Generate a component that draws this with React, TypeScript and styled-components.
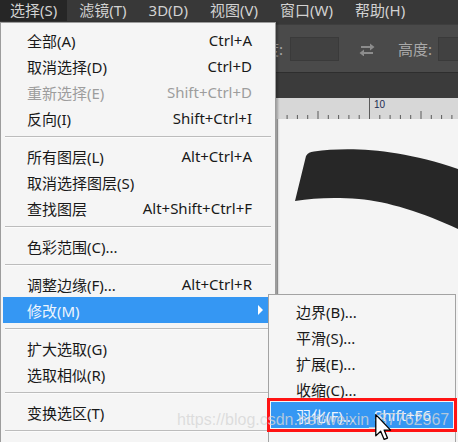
import styled, { createGlobalStyle } from 'styled-components';

const GlobalStyle = createGlobalStyle`
  html, body {
    margin: 0;
    padding: 0;
  }
  body {
    width: 458px;
    height: 442px;
    overflow: hidden;
    background: #282828;
    font-family: "Noto Sans", "Noto Sans CJK SC", sans-serif;
  }
`;

const Screen = styled.div`
  position: relative;
  width: 458px;
  height: 442px;
  overflow: hidden;
  display: flex;
  flex-direction: column;
  background: #282828;
`;

const MenuBar = styled.div`
  display: flex;
  gap: 2px;
  height: 24px;
  flex-shrink: 0;
  background: #383838;
`;

const MenuTitle = styled.div<{ $open?: boolean }>`
  height: 21px;
  padding: 0 10px;
  font-size: 15px;
  line-height: 21px;
  white-space: nowrap;
  color: #d2d2d2;
  background: ${(p) => (p.$open ? '#262626' : 'transparent')};
`;

const OptionsBar = styled.div`
  display: flex;
  align-items: center;
  height: 47px;
  flex-shrink: 0;
  padding-left: 249px;
  overflow: hidden;
  background: #4a4a4a;
  border-top: 1px solid #3e3e3e;
  border-bottom: 1px solid #2e2e2e;
`;

const OptionLabel = styled.span<{ $gap?: number }>`
  flex-shrink: 0;
  margin-left: ${(p) => p.$gap ?? 0}px;
  font-size: 15px;
  white-space: nowrap;
  color: #a9a9a9;
`;

const OptionField = styled.div<{ $gap: number }>`
  flex-shrink: 0;
  width: 49px;
  height: 24px;
  margin-left: ${(p) => p.$gap}px;
  background: #414141;
  border: 1px solid #3a3a3a;
  box-sizing: border-box;
`;

const SwapIcon = styled.svg`
  margin-left: 19px;
  flex-shrink: 0;
`;

const TabStrip = styled.div`
  height: 25px;
  flex-shrink: 0;
  background: #3b3b3b;
`;

const Workspace = styled.div`
  display: flex;
  flex: 1;
`;

const LeftPane = styled.div`
  width: 257px;
  background: #282828;
`;

const Document = styled.div`
  display: flex;
  flex-direction: column;
  flex: 1;
`;

const HRuler = styled.svg`
  display: block;
  height: 21px;
  width: 100%;
  background: #d7d7d7;
`;

const DocBody = styled.div`
  display: flex;
  flex: 1;
`;

const VRuler = styled.div`
  width: 21px;
  background: #cdcdcd;
  border-right: 1px solid #a9a9a9;
`;

const Canvas = styled.div`
  flex: 1;
  background: #f4f4f4;
`;

const Dropdown = styled.div`
  position: absolute;
  left: 0;
  top: 22px;
  width: 276px;
  height: 440px;
  padding-top: 4px;
  box-sizing: border-box;
  background: #f5f5f5;
  border: 1px solid #9c9c9c;
  box-shadow: 2px 0 2px rgba(0, 0, 0, 0.25);
  font-size: 15px;
`;

const Item = styled.div<{ $active?: boolean; $disabled?: boolean }>`
  display: flex;
  align-items: center;
  height: 26px;
  margin: 0 2px;
  padding: 0 21px 0 24px;
  white-space: nowrap;
  color: ${(p) => (p.$active ? '#eef5fd' : p.$disabled ? '#9d9d9d' : '#191919')};
  background: ${(p) => (p.$active ? '#3597f3' : 'transparent')};
`;

const Shortcut = styled.span`
  margin-left: auto;
`;

const SubArrow = styled.span`
  margin-left: auto;
  margin-right: -11px;
  width: 0;
  height: 0;
  border-top: 5px solid transparent;
  border-bottom: 5px solid transparent;
  border-left: 5px solid #ffffff;
`;

const Separator = styled.div`
  height: 1px;
  margin: 5px 4px;
  background: #bcbcbc;
  border-bottom: 1px solid #fbfbfb;
`;

const Submenu = styled.div`
  position: absolute;
  left: 268px;
  top: 294px;
  width: 188px;
  height: 170px;
  padding-top: 3px;
  box-sizing: border-box;
  background: #f5f5f5;
  border: 1px solid #a3a3a3;
  font-size: 15px;
`;

const SubItem = styled.div<{ $active?: boolean; $marked?: boolean }>`
  display: flex;
  align-items: center;
  height: 26px;
  margin: 0 2px;
  padding: 0 22px 0 25px;
  white-space: nowrap;
  color: ${(p) => (p.$active ? '#eef5fd' : '#191919')};
  background: ${(p) => (p.$active ? '#3597f3' : 'transparent')};
  outline: ${(p) => (p.$marked ? '3px solid #ff1414' : 'none')};
  outline-offset: 1px;
`;

const Watermark = styled.div`
  position: absolute;
  left: 177px;
  top: 410px;
  font-family: "Liberation Sans", Arial, sans-serif;
  font-size: 16px;
  line-height: 20px;
  color: rgba(214, 214, 214, 0.78);
  pointer-events: none;
`;

const Cursor = styled.svg`
  position: absolute;
  left: 375px;
  top: 414px;
`;

type Entry =
  | { label: string; shortcut?: string; disabled?: boolean; active?: boolean; submenu?: boolean }
  | 'sep';

const topMenus = ['选择(S)', '滤镜(T)', '3D(D)', '视图(V)', '窗口(W)', '帮助(H)'];

const selectMenu: Entry[] = [
  { label: '全部(A)', shortcut: 'Ctrl+A' },
  { label: '取消选择(D)', shortcut: 'Ctrl+D' },
  { label: '重新选择(E)', shortcut: 'Shift+Ctrl+D', disabled: true },
  { label: '反向(I)', shortcut: 'Shift+Ctrl+I' },
  'sep',
  { label: '所有图层(L)', shortcut: 'Alt+Ctrl+A' },
  { label: '取消选择图层(S)' },
  { label: '查找图层', shortcut: 'Alt+Shift+Ctrl+F' },
  'sep',
  { label: '色彩范围(C)...' },
  'sep',
  { label: '调整边缘(F)...', shortcut: 'Alt+Ctrl+R' },
  { label: '修改(M)', active: true, submenu: true },
  'sep',
  { label: '扩大选取(G)' },
  { label: '选取相似(R)' },
  'sep',
  { label: '变换选区(T)' },
  'sep',
];

const modifyMenu = [
  { label: '边界(B)...' },
  { label: '平滑(S)...' },
  { label: '扩展(E)...' },
  { label: '收缩(C)...' },
  { label: '羽化(F)...', shortcut: 'Shift+F6', active: true },
];

// 눈금 위치 (10 표시 기준)
const ticks = Array.from({ length: 22 }, (_, i) => i - 8);

const App = () => {
  return (
    <>
      <GlobalStyle />
      <Screen>
        <MenuBar>
          {topMenus.map((m, i) => (
            <MenuTitle key={m} $open={i === 0}>
              {m}
            </MenuTitle>
          ))}
        </MenuBar>

        <OptionsBar>
          <OptionLabel>宽度:</OptionLabel>
          <OptionField $gap={7} />
          <SwapIcon width="18" height="14" viewBox="0 0 18 14">
            <path d="M3 4h9V1.5L16.5 5 12 8.5V6H3z" fill="#8c8c8c" />
            <path d="M15 10H6V7.5L1.5 11 6 14.5V12h9z" fill="#8c8c8c" />
          </SwapIcon>
          <OptionLabel $gap={22}>高度:</OptionLabel>
          <OptionField $gap={6} />
        </OptionsBar>

        <TabStrip />

        <Workspace>
          <LeftPane />
          <Document>
            <HRuler viewBox="0 0 201 21" preserveAspectRatio="xMinYMin">
              {ticks.map((t) => {
                const x = 113 + t * 10.3;
                const h = t === 0 ? 21 : t % 5 === 0 ? 8 : 4;
                return <rect key={t} x={x} y={21 - h} width="1" height={h} fill="#5a5a5a" />;
              })}
              <text x="118" y="10" fontSize="10" fill="#1d2b52" fontFamily="Liberation Sans, sans-serif">
                10
              </text>
            </HRuler>
            <DocBody>
              <VRuler />
              <Canvas>
                <svg width="180" height="324" viewBox="0 0 180 324">
                  <path
                    d="M17 82 L28 37 C30 34 32 33 36 32.5 C70 28 118 29 180 50 L180 110 C146 94 108 82 81 80 C56 78 36 79 17 82 Z"
                    fill="#272727"
                  />
                </svg>
              </Canvas>
            </DocBody>
          </Document>
        </Workspace>

        <Dropdown>
          {selectMenu.map((e, i) =>
            e === 'sep' ? (
              <Separator key={i} />
            ) : (
              <Item key={i} $active={e.active} $disabled={e.disabled}>
                {e.label}
                {e.shortcut && <Shortcut>{e.shortcut}</Shortcut>}
                {e.submenu && <SubArrow />}
              </Item>
            ),
          )}
        </Dropdown>

        <Submenu>
          {modifyMenu.map((e) => (
            <SubItem key={e.label} $active={e.active} $marked={e.active}>
              {e.label}
              {e.shortcut && <Shortcut>{e.shortcut}</Shortcut>}
            </SubItem>
          ))}
        </Submenu>

        <Watermark>https://blog.csdn.net/weixin_37762567</Watermark>

        <Cursor width="17" height="27" viewBox="0 0 13 21">
          <path
            d="M0.5 0.5 L0.5 17 L4.3 13.4 L7 19.8 L9.6 18.7 L7 12.5 L12 12.5 Z"
            fill="#ffffff"
            stroke="#000000"
            strokeWidth="1"
            strokeLinejoin="round"
          />
        </Cursor>
      </Screen>
    </>
  );
};

export default App;
